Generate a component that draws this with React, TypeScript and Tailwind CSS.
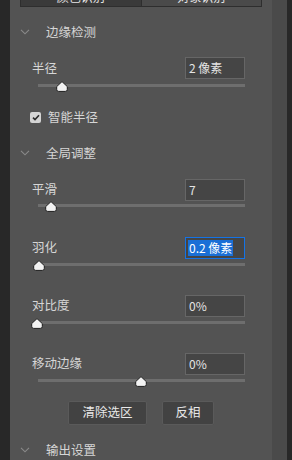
import React from "react";

const font = { fontFamily: '"Noto Sans CJK SC", "Noto Sans", sans-serif' };

function Chevron() {
  return (
    <svg width="10" height="6" viewBox="0 0 10 6" className="shrink-0" aria-hidden="true">
      <polyline points="1,0.8 5,4.8 9,0.8" fill="none" stroke="#8a8a8a" strokeWidth="1.1" />
    </svg>
  );
}

function SectionHeader({ title, className }: { title: string; className: string }) {
  return (
    <div className={`flex h-[20px] items-center pl-[10px] ${className}`}>
      <Chevron />
      <span className="ml-[16px] text-[12.5px] leading-none text-[#d6d6d6]">{title}</span>
    </div>
  );
}

function Thumb({ left }: { left: number }) {
  return (
    <svg
      width="12"
      height="11"
      viewBox="0 0 12 11"
      className="absolute top-[-3px]"
      style={{ left }}
      aria-hidden="true"
    >
      <path
        d="M6 0.6 L11.3 5.6 V8.4 Q11.3 10.4 9.3 10.4 H2.7 Q0.7 10.4 0.7 8.4 V5.6 Z"
        fill="#f2f2f2"
        stroke="#1c1c1c"
        strokeWidth="1"
      />
    </svg>
  );
}

function Field({
  label,
  value,
  thumb,
  focused,
  className,
  trackClass,
}: {
  label: string;
  value: string;
  thumb: number;
  focused?: boolean;
  className: string;
  trackClass: string;
}) {
  return (
    <div className={className}>
      <div className="flex items-center justify-between pl-[22px] pr-[27px]">
        <span className="text-[12.5px] leading-none text-[#d6d6d6]">{label}</span>
        <div
          className={`flex h-[22px] w-[60px] items-center bg-[#454545] px-[2px] text-[12px] leading-none ${
            focused ? "border border-[#1473e6]" : "border border-[#666666]"
          }`}
        >
          {focused ? (
            <span className="bg-[#1a6fd6] px-[1px] py-[2px] text-white">{value}</span>
          ) : (
            <span className="px-[1px] text-[#e4e4e4]">{value}</span>
          )}
        </div>
      </div>
      <div className={`relative ml-[28px] h-[3px] w-[207px] bg-[#6e6e6e] ${trackClass}`}>
        <Thumb left={thumb} />
      </div>
    </div>
  );
}

export default function App() {
  return (
    <div className="flex h-[460px] w-[292px] overflow-hidden bg-[#282828]" style={font}>
      <div className="w-[10px] shrink-0" />
      <div className="flex w-[262px] shrink-0 flex-col bg-[#535353]">
        <div className="mx-[10px] -mt-[14px] flex h-[22px] border border-[#2e2e2e] text-[12px] text-[#e6e6e6]">
          <div className="flex flex-1 items-center justify-center bg-[#3a3a3a]">颜色识别</div>
          <div className="flex flex-1 items-center justify-center border-l border-[#2e2e2e] bg-[#4a4a4a]">
            对象识别
          </div>
        </div>

        <SectionHeader title="边缘检测" className="mt-[15px]" />
        <Field label="半径" value="2 像素" thumb={18} className="mt-[15px]" trackClass="mt-[5px]" />

        <div className="mt-[23px] flex h-[16px] items-center pl-[20px]">
          <span className="flex h-[11px] w-[11px] items-center justify-center rounded-[2px] bg-[#d4d4d4]">
            <svg width="8" height="7" viewBox="0 0 8 7" aria-hidden="true">
              <polyline points="1,3.6 3,5.6 7,1.2" fill="none" stroke="#2a2a2a" strokeWidth="1.6" />
            </svg>
          </span>
          <span className="ml-[7px] text-[12.5px] leading-none text-[#d6d6d6]">智能半径</span>
        </div>

        <SectionHeader title="全局调整" className="mt-[18px]" />
        <Field label="平滑" value="7" thumb={7} className="mt-[16px]" trackClass="mt-[3px]" />
        <Field label="羽化" value="0.2 像素" thumb={-5} focused className="mt-[30px]" trackClass="mt-[4px]" />
        <Field label="对比度" value="0%" thumb={-7} className="mt-[29px]" trackClass="mt-[4px]" />
        <Field label="移动边缘" value="0%" thumb={97} className="mt-[29px]" trackClass="mt-[4px]" />

        <div className="mt-[19px] flex justify-center gap-[15px] text-[12.5px] text-[#e8e8e8]">
          <button className="flex h-[24px] w-[79px] items-center justify-center rounded-[2px] border border-[#5a5a5a] bg-[#424242]">
            清除选区
          </button>
          <button className="flex h-[24px] w-[52px] items-center justify-center rounded-[2px] border border-[#5a5a5a] bg-[#424242]">
            反相
          </button>
        </div>

        <SectionHeader title="输出设置" className="mt-[16px]" />
      </div>
      <div className="w-[15px] shrink-0 bg-[#4a4a4a]" />
    </div>
  );
}
